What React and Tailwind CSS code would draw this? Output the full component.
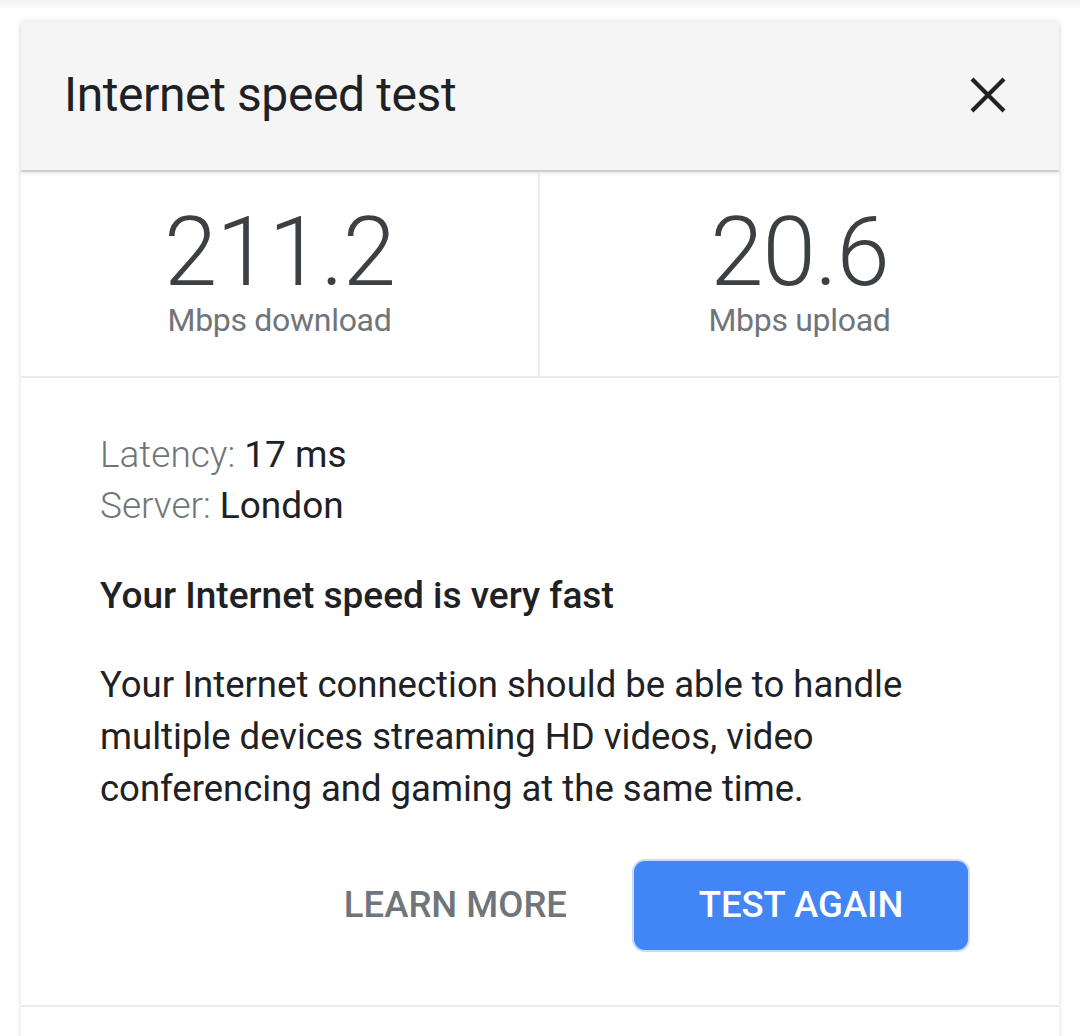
import React from "react";

export default function App() {
  const font = { fontFamily: "Roboto, 'Noto Sans', Arial, sans-serif" };
  return (
    <div className="min-h-[1036px] bg-white overflow-hidden" style={font}>
      <div className="h-[10px] bg-gradient-to-b from-[#f1f1f1] to-white" />
      <div className="mx-[21px] mt-[12px] bg-white shadow-[0_0_6px_rgba(0,0,0,0.14)]">
        <div className="h-[150px] bg-[#f5f5f5] flex items-center justify-between pl-[43px] pr-[53px] border-b-2 border-[#cfcfcf] shadow-[0_2px_3px_rgba(0,0,0,0.08)]">
          <div className="text-[48px] text-[#202124] tracking-[-0.4px] leading-none mt-[-2px]">
            Internet speed test
          </div>
          <svg width="36" height="36" viewBox="0 0 36 36" className="mt-[-2px]">
            <path d="M2 2 L34 34 M34 2 L2 34" stroke="#202124" strokeWidth="4.2" strokeLinecap="butt" />
          </svg>
        </div>
        <div className="grid grid-cols-2 h-[206px] border-b-2 border-[#ebebeb]">
          <div className="flex flex-col items-center pt-[32px] border-r-2 border-[#ebebeb]">
            <div className="text-[96px] font-light leading-[96px] text-[#3c4043] tracking-[-1px]">211.2</div>
            <div className="text-[32px] leading-[36px] text-[#70757a] tracking-[-0.3px] mt-[2px]">Mbps download</div>
          </div>
          <div className="flex flex-col items-center pt-[32px]">
            <div className="text-[96px] font-light leading-[96px] text-[#3c4043] tracking-[-1px]">20.6</div>
            <div className="text-[32px] leading-[36px] text-[#70757a] tracking-[-0.3px] mt-[2px]">Mbps upload</div>
          </div>
        </div>
        <div className="pl-[79px] pr-[91px] pt-[51px] pb-[55px] border-b-2 border-[#ebebeb]">
          <div className="text-[37px] leading-[51px]">
            <span className="font-light text-[#70757a]">Latency: </span>
            <span className="text-[#202124]">17 ms</span>
          </div>
          <div className="text-[37px] leading-[51px]">
            <span className="font-light text-[#70757a]">Server: </span>
            <span className="text-[#202124]">London</span>
          </div>
          <div className="mt-[39px] text-[37px] leading-[51px] font-medium text-[#202124]">
            Your Internet speed is very fast
          </div>
          <div className="mt-[38px] text-[36.5px] leading-[52px] text-[#202124]">
            Your Internet connection should be able to handle multiple devices streaming HD videos, video conferencing and gaming at the same time.
          </div>
          <div className="mt-[46px] flex items-center justify-end gap-[67px]">
            <div className="text-[36.5px] font-medium text-[#70757a] leading-none">LEARN MORE</div>
            <div className="w-[334px] h-[89px] rounded-[11px] bg-[#4285f4] ring-2 ring-[#c9dcfc] flex items-center justify-center">
              <span className="text-[36.5px] font-medium text-white leading-none">TEST AGAIN</span>
            </div>
          </div>
        </div>
        <div className="h-[40px]" />
      </div>
    </div>
  );
}
